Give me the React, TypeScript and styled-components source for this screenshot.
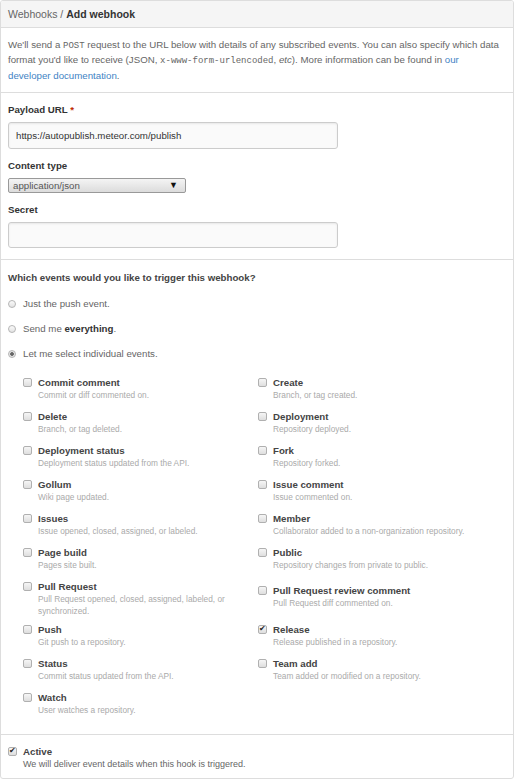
import React from "react";
import styled, { createGlobalStyle } from "styled-components";

const Global = createGlobalStyle`
  html, body { margin: 0; padding: 0; background: #fff; }
  body { font-family: "Liberation Sans", Arial, sans-serif; font-size: 9.7px; color: #333; }
  * { box-sizing: border-box; }
`;

const Box = styled.div`
  width: 514px;
  border: 1px solid #ddd;
  border-radius: 3px;
  overflow: hidden;
`;

const Header = styled.div`
  height: 27px;
  background: #f5f5f5;
  border-bottom: 1px solid #ddd;
  padding: 0 7px;
  display: flex;
  align-items: center;
  font-size: 10.5px;
  color: #666;
`;

const Strong = styled.strong`
  color: #333;
  margin-left: 3px;
`;

const Section = styled.div<{ $pt: number; $pb: number }>`
  padding: ${(p) => p.$pt}px 7px ${(p) => p.$pb}px;
  border-bottom: 1px solid #ddd;
  &:last-child { border-bottom: none; }
`;

const Intro = styled.p`
  margin: 0;
  max-width: 494px;
  color: #666;
  line-height: 14.3px;
`;

const Code = styled.code`
  font-family: "Liberation Mono", monospace;
  font-size: 9px;
`;

const Link = styled.a`
  color: #4183c4;
  text-decoration: none;
`;

const Form = styled.div`
  display: flex;
  flex-direction: column;
  gap: 10px;
`;

const Field = styled.div`
  display: flex;
  flex-direction: column;
  align-items: flex-start;
  gap: 5px;
`;

const Label = styled.label`
  font-weight: bold;
  color: #333;
  line-height: 14px;
`;

const Req = styled.span`
  color: #bd2c00;
`;

const TextInput = styled.div<{ $h?: number }>`
  width: 330px;
  height: ${(p) => p.$h ?? 27}px;
  border: 1px solid #ccc;
  border-radius: 3px;
  background: #fafafa;
  box-shadow: inset 0 1px 2px rgba(0, 0, 0, 0.075);
  padding: 0 7px;
  display: flex;
  align-items: center;
  color: #333;
`;

const Select = styled.div`
  width: 178px;
  height: 15px;
  border: 1px solid #999;
  border-radius: 2px;
  background: linear-gradient(#f4f4f4, #dcdcdc);
  display: flex;
  align-items: center;
  justify-content: space-between;
  padding: 0 7px 0 4px;
  color: #555;
`;

const Arrow = styled.span`
  font-size: 9px;
  color: #111;
`;

const Question = styled.div`
  font-weight: bold;
  color: #444;
  line-height: 14px;
`;

const Radios = styled.div`
  display: flex;
  flex-direction: column;
  gap: 11px;
  margin-top: 12px;
`;

const RadioRow = styled.div`
  display: flex;
  align-items: center;
  gap: 7px;
  height: 14px;
  color: #666;
`;

const Radio = styled.span<{ $on?: boolean }>`
  width: 8px;
  height: 8px;
  border-radius: 50%;
  border: 1px solid #b5b5b5;
  background: ${(p) =>
    p.$on
      ? "radial-gradient(circle, #666 0 1.5px, #e6e6e6 2.2px)"
      : "linear-gradient(#fafafa, #e3e3e3)"};
  flex: none;
`;

const Mono = styled.code`
  font-family: "Liberation Sans", Arial, sans-serif;
`;

const Dark = styled.b`
  color: #333;
`;

const Grid = styled.div`
  display: grid;
  grid-template-columns: 235px 1fr;
  grid-auto-flow: column;
  grid-template-rows: repeat(10, auto);
  align-items: center;
  padding-left: 15px;
  margin-top: 15px;
`;

const Item = styled.div<{ $plain?: boolean }>`
  display: flex;
  align-items: flex-start;
  gap: 6px;
  min-height: ${(p) => (p.$plain ? "0" : "34px")};
  padding-bottom: ${(p) => (p.$plain ? "0" : "6px")};
`;

const Check = styled.span`
  width: 9px;
  height: 9px;
  margin-top: 2px;
  border: 1px solid #b0b0b0;
  border-radius: 2px;
  background: linear-gradient(#f6f6f6, #dedede);
  flex: none;
  display: flex;
  align-items: center;
  justify-content: center;
  font-size: 8px;
  line-height: 1;
  color: #222;
`;

const ItemText = styled.div`
  display: flex;
  flex-direction: column;
`;

const Title = styled.span`
  font-weight: bold;
  color: #444;
  line-height: 13px;
`;

const Desc = styled.span`
  color: #aaa;
  font-size: 8.3px;
  line-height: 12px;
`;

const ActiveDesc = styled.span`
  color: #666;
  font-size: 9px;
  line-height: 13px;
`;

const left: [string, string][] = [
  ["Commit comment", "Commit or diff commented on."],
  ["Delete", "Branch, or tag deleted."],
  ["Deployment status", "Deployment status updated from the API."],
  ["Gollum", "Wiki page updated."],
  ["Issues", "Issue opened, closed, assigned, or labeled."],
  ["Page build", "Pages site built."],
  ["Pull Request", "Pull Request opened, closed, assigned, labeled, or synchronized."],
  ["Push", "Git push to a repository."],
  ["Status", "Commit status updated from the API."],
  ["Watch", "User watches a repository."],
];

const right: [string, string, boolean?][] = [
  ["Create", "Branch, or tag created."],
  ["Deployment", "Repository deployed."],
  ["Fork", "Repository forked."],
  ["Issue comment", "Issue commented on."],
  ["Member", "Collaborator added to a non-organization repository."],
  ["Public", "Repository changes from private to public."],
  ["Pull Request review comment", "Pull Request diff commented on."],
  ["Release", "Release published in a repository.", true],
  ["Team add", "Team added or modified on a repository."],
];

const EventItem = ({ t, d, on }: { t: string; d: string; on?: boolean }) => (
  <Item>
    <Check>{on ? "✔" : ""}</Check>
    <ItemText>
      <Title>{t}</Title>
      <Desc>{d}</Desc>
    </ItemText>
  </Item>
);

export default function App() {
  return (
    <>
      <Global />
      <Box>
        <Header>
          Webhooks /<Strong>Add webhook</Strong>
        </Header>
        <Section $pt={10} $pb={9}>
          <Intro>
            We'll send a <Code>POST</Code> request to the URL below with details of any subscribed
            events. You can also specify which data format you'd like to receive (JSON,{" "}
            <Code>x-www-form-urlencoded</Code>, <i>etc</i>). More information can be found in{" "}
            <Link>our developer documentation</Link>.
          </Intro>
        </Section>
        <Section $pt={10} $pb={11}>
          <Form>
            <Field>
              <Label>
                Payload URL <Req>*</Req>
              </Label>
              <TextInput>https://autopublish.meteor.com/publish</TextInput>
            </Field>
            <Field>
              <Label>Content type</Label>
              <Select>
                application/json <Arrow>▼</Arrow>
              </Select>
            </Field>
            <Field>
              <Label>Secret</Label>
              <TextInput $h={26} />
            </Field>
          </Form>
        </Section>
        <Section $pt={11} $pb={9}>
          <Question>Which events would you like to trigger this webhook?</Question>
          <Radios>
            <RadioRow>
              <Radio />
              <span>
                Just the <Mono>push</Mono> event.
              </span>
            </RadioRow>
            <RadioRow>
              <Radio />
              <span>
                Send me <Dark>everything</Dark>.
              </span>
            </RadioRow>
            <RadioRow>
              <Radio $on />
              <span>Let me select individual events.</span>
            </RadioRow>
          </Radios>
          <Grid>
            {left.map(([t, d]) => (
              <EventItem key={t} t={t} d={d} />
            ))}
            {right.map(([t, d, on]) => (
              <EventItem key={t} t={t} d={d} on={on} />
            ))}
          </Grid>
        </Section>
        <Section $pt={10} $pb={7}>
          <Item $plain>
            <Check>✔</Check>
            <ItemText>
              <Title>Active</Title>
              <ActiveDesc>We will deliver event details when this hook is triggered.</ActiveDesc>
            </ItemText>
          </Item>
        </Section>
      </Box>
    </>
  );
}
